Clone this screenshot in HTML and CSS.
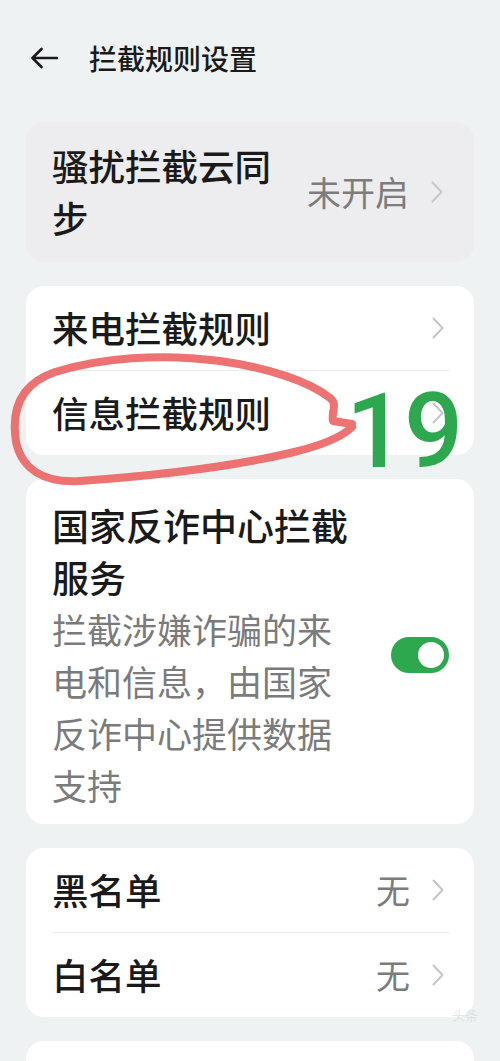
FILE: index.html
```html
<!DOCTYPE html>
<html lang="zh-CN">
<head>
<meta charset="utf-8">
<title>拦截规则设置</title>
<link rel="stylesheet" href="styles.css">
</head>
<body>
<div class="page">
  <header class="header">
    <svg class="back" width="28" height="22" viewBox="0 0 28 22">
      <path d="M27 11 H2.5 M11.5 2 L2.5 11 L11.5 20" fill="none" stroke="#1a1a1a" stroke-width="2.6" stroke-linecap="round" stroke-linejoin="round"/>
    </svg>
    <h1 class="title">拦截规则设置</h1>
  </header>

  <main class="cards">
    <section class="card card-grey card-pad">
      <div class="label label-wrap">骚扰拦截云同步</div>
      <div class="right">
        <span class="value">未开启</span>
        <svg class="chev" width="12" height="22" viewBox="0 0 12 22"><path d="M1.5 1.5 L10.5 11 L1.5 20.5" fill="none" stroke="#c6c6c6" stroke-width="2" stroke-linecap="round" stroke-linejoin="round"/></svg>
      </div>
    </section>

    <section class="card">
      <div class="row">
        <div class="label">来电拦截规则</div>
        <div class="right">
          <svg class="chev" width="12" height="22" viewBox="0 0 12 22"><path d="M1.5 1.5 L10.5 11 L1.5 20.5" fill="none" stroke="#c6c6c6" stroke-width="2" stroke-linecap="round" stroke-linejoin="round"/></svg>
        </div>
      </div>
      <div class="divider"></div>
      <div class="row">
        <div class="label">信息拦截规则</div>
        <div class="right">
          <svg class="chev" width="12" height="22" viewBox="0 0 12 22"><path d="M1.5 1.5 L10.5 11 L1.5 20.5" fill="none" stroke="#c6c6c6" stroke-width="2" stroke-linecap="round" stroke-linejoin="round"/></svg>
        </div>
      </div>
    </section>

    <section class="card card-service">
      <div class="service-text">
        <div class="service-title">国家反诈中心拦截服务</div>
        <div class="service-sub">拦截涉嫌诈骗的来电和信息，由国家反诈中心提供数据支持</div>
      </div>
      <div class="toggle"><span class="knob"></span></div>
    </section>

    <section class="card">
      <div class="row">
        <div class="label">黑名单</div>
        <div class="right">
          <span class="value">无</span>
          <svg class="chev" width="12" height="22" viewBox="0 0 12 22"><path d="M1.5 1.5 L10.5 11 L1.5 20.5" fill="none" stroke="#c6c6c6" stroke-width="2" stroke-linecap="round" stroke-linejoin="round"/></svg>
        </div>
      </div>
      <div class="divider"></div>
      <div class="row">
        <div class="label">白名单</div>
        <div class="right">
          <span class="value">无</span>
          <svg class="chev" width="12" height="22" viewBox="0 0 12 22"><path d="M1.5 1.5 L10.5 11 L1.5 20.5" fill="none" stroke="#c6c6c6" stroke-width="2" stroke-linecap="round" stroke-linejoin="round"/></svg>
        </div>
      </div>
    </section>

    <section class="card card-tail"></section>
  </main>

  <svg class="annot" width="500" height="1061" viewBox="0 0 500 1061">
    <path d="M352 424 L333 421 C331 412 338 404 330 398 C310 382 270 368 220 361 C160 353 100 358 55 372 C20 384 11 410 16 442 C22 470 45 483 80 481 C150 476 230 467 290 453 C320 446 342 437 352 427" fill="none" stroke="#ec5f5f" stroke-opacity="0.88" stroke-width="8" stroke-linecap="round" stroke-linejoin="round"/>
  </svg>
  <div class="num">19</div>
  <div class="mark">头条</div>
</div>
</body>
</html>
```

FILE: styles.css
```css
* { box-sizing: border-box; }
html, body { margin: 0; padding: 0; }
body {
  background: #eef2f3;
  font-family: "Noto Sans CJK SC", "Noto Sans", sans-serif;
  color: #1a1a1a;
}
.page {
  position: relative;
  width: 500px;
  height: 1061px;
  overflow: hidden;
}
.header {
  height: 116px;
  display: flex;
  align-items: center;
  padding-left: 30px;
  gap: 31px;
}
.back { display: block; flex: none; }
.title {
  margin: 0;
  font-size: 28px;
  font-weight: 500;
  line-height: 1;
  color: #1a1a1a;
}
.cards {
  display: flex;
  flex-direction: column;
  gap: 24px;
  padding: 6px 26px 0 26px;
}
.card {
  background: #ffffff;
  border-radius: 18px;
}
.card-grey { background: #ededef; }
.card-pad {
  display: flex;
  align-items: center;
  padding: 18px 31px 18px 26px;
  gap: 20px;
}
.label {
  font-size: 36.5px;
  font-weight: 500;
  line-height: 52px;
  color: #1a1a1a;
}
.label-wrap { flex: 1; min-width: 0; }
.right {
  display: flex;
  align-items: center;
  gap: 22px;
  margin-left: auto;
  flex: none;
}
.value {
  font-size: 34px;
  line-height: 52px;
  color: #7c7c7c;
  font-weight: 400;
}
.chev { display: block; }
.row {
  height: 84px;
  display: flex;
  align-items: center;
  padding: 0 30px 0 26px;
}
.divider {
  height: 1px;
  background: #ececec;
  margin: 0 24px 0 26px;
}
.card-service {
  display: flex;
  align-items: center;
  padding: 20px 25px 13px 26px;
}
.service-text { width: 305px; }
.service-title {
  font-size: 37px;
  font-weight: 500;
  line-height: 52px;
  color: #1a1a1a;
}
.service-sub {
  font-size: 35px;
  line-height: 52px;
  color: #7b7b7b;
}
.toggle {
  margin-left: auto;
  width: 58px;
  height: 36px;
  border-radius: 18px;
  background: #2ea84f;
  position: relative;
  flex: none;
}
.knob {
  position: absolute;
  right: 5px;
  top: 5px;
  width: 26px;
  height: 26px;
  border-radius: 50%;
  background: #ffffff;
}
.card-tail { height: 60px; }
.annot {
  position: absolute;
  left: 0;
  top: 0;
  pointer-events: none;
}
.num {
  position: absolute;
  left: 346px;
  top: 380px;
  font-family: Roboto, "Liberation Sans", sans-serif;
  font-weight: 500;
  font-size: 104px;
  line-height: 1;
  letter-spacing: -1px;
  color: #2da84e;
}
.mark {
  position: absolute;
  left: 452px;
  top: 1005px;
  font-size: 13px;
  color: rgba(205, 212, 216, 0.55);
}
```
